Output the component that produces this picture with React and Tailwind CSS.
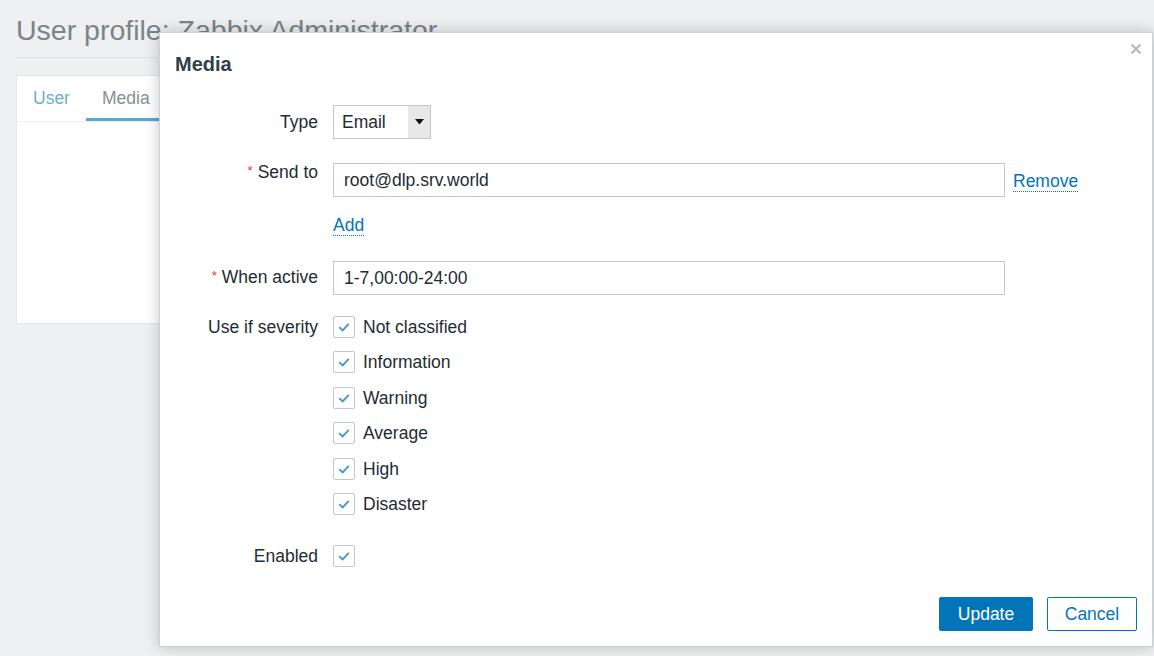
import { useState } from "react";

const font = { fontFamily: '"Liberation Sans", Arial, sans-serif' };

const severities = [
  "Not classified",
  "Information",
  "Warning",
  "Average",
  "High",
  "Disaster",
];

function Checkbox({ checked, onChange }) {
  return (
    <button
      type="button"
      onClick={onChange}
      className="w-[22px] h-[22px] shrink-0 flex items-center justify-center bg-white border border-[#bfc8cd] rounded-[2px]"
    >
      {checked && (
        <svg width="14" height="14" viewBox="0 0 14 14">
          <polyline
            points="2.2,7.2 5.6,10.4 11.8,3.8"
            fill="none"
            stroke="#3e97d0"
            strokeWidth="1.8"
          />
        </svg>
      )}
    </button>
  );
}

function Req() {
  return <span className="text-[#e33734] text-[13px] mr-[5px] relative -top-[3px]">*</span>;
}

const label = "w-[158px] shrink-0 text-right text-[17.5px] text-[#1f2c33] leading-[21px] whitespace-nowrap";
const inputClass =
  "h-[34px] w-[672px] bg-white border border-[#bfc8cd] px-[10px] text-[17.5px] text-[#1f2c33] outline-none";
const link = "text-[#0275b8] text-[17.5px] leading-[20px] border-b border-dotted border-[#0275b8]";

export default function App() {
  const [checks, setChecks] = useState(severities.map(() => true));
  const [enabled, setEnabled] = useState(true);
  const [sendTo, setSendTo] = useState("root@dlp.srv.world");
  const [period, setPeriod] = useState("1-7,00:00-24:00");

  return (
    <div style={font} className="relative w-[1154px] h-[656px] overflow-hidden bg-[#eef0f2]">
      {/* Page behind the dialog */}
      <div className="px-4">
        <div className="pt-[13px] pb-[10px] border-b border-[#dde2e5]">
          <h1 className="text-[28.5px] leading-[34px] text-[#7a8489]">User profile: Zabbix Administrator</h1>
        </div>
        <div className="mt-[17px] h-[249px] bg-white border border-[#e2e6e9]">
          <div className="flex border-b border-[#ebeef0]">
            <div className="px-4 h-[45px] flex items-center text-[17.5px] text-[#6aaed6]">User</div>
            <div className="px-4 h-[45px] flex items-center text-[17.5px] text-[#858f95] border-b-[3px] border-[#5ea6d3] pt-[3px]">
              Media
            </div>
          </div>
        </div>
      </div>

      {/* Dialog */}
      <div className="absolute left-[159px] top-[32px] w-[994px] h-[615px] bg-white border border-[#c9d2d6] shadow-[0_0_14px_rgba(0,0,0,0.22)] flex flex-col">
        <div className="pt-[19px] pl-[15px] text-[20px] leading-[24px] font-bold text-[#2f3f48]">Media</div>
        <button className="absolute right-[9px] top-[9px] w-[14px] h-[14px] flex items-center justify-center">
          <svg width="12" height="12" viewBox="0 0 12 12">
            <path d="M1.5 1.5 L10.5 10.5 M10.5 1.5 L1.5 10.5" stroke="#b0b8bc" strokeWidth="2" />
          </svg>
        </button>

        {/* Type */}
        <div className="flex items-center mt-[29px]">
          <div className={label}>Type</div>
          <div className="ml-[15px] h-[34px] w-[98px] flex border border-[#bfc8cd] bg-white">
            <span className="flex-1 pl-[8px] flex items-center text-[17.5px] text-[#1f2c33]">Email</span>
            <span className="w-[22px] bg-[#e8e8e8] flex items-center justify-center">
              <svg width="9" height="6" viewBox="0 0 9 6">
                <path d="M0 0 H9 L4.5 5.5 Z" fill="#111" />
              </svg>
            </span>
          </div>
        </div>

        {/* Send to */}
        <div className="flex items-start mt-[24px]">
          <div className={label + " -mt-[1px]"}>
            <Req />
            Send to
          </div>
          <input
            value={sendTo}
            onChange={(e) => setSendTo(e.target.value)}
            className={inputClass + " ml-[15px]"}
          />
          <div className="ml-[8px] mt-[7px]">
            <span className={link}>Remove</span>
          </div>
        </div>

        <div className="flex mt-[16px] h-[24px]">
          <div className="w-[158px]" />
          <div className="ml-[15px] pt-[1px]">
            <span className={link}>Add</span>
          </div>
        </div>

        {/* When active */}
        <div className="flex items-center mt-[24px]">
          <div className={label}>
            <Req />
            When active
          </div>
          <input
            value={period}
            onChange={(e) => setPeriod(e.target.value)}
            className={inputClass + " ml-[15px]"}
          />
        </div>

        {/* Severity */}
        <div className="flex items-start mt-[21px]">
          <div className={label + " leading-[22px]"}>Use if severity</div>
          <div className="ml-[15px] flex flex-col gap-[13.4px]">
            {severities.map((s, i) => (
              <div key={s} className="flex items-center gap-[8px]">
                <Checkbox
                  checked={checks[i]}
                  onChange={() => setChecks(checks.map((c, j) => (j === i ? !c : c)))}
                />
                <span className="text-[17.5px] leading-[22px] text-[#1f2c33]">{s}</span>
              </div>
            ))}
          </div>
        </div>

        {/* Enabled */}
        <div className="flex items-center mt-[30px]">
          <div className={label + " leading-[22px]"}>Enabled</div>
          <div className="ml-[15px]">
            <Checkbox checked={enabled} onChange={() => setEnabled(!enabled)} />
          </div>
        </div>

        <div className="flex justify-end gap-[14px] mt-[30px] pr-[15px]">
          <button className="h-[34px] w-[94px] bg-[#0275b8] border border-[#0275b8] rounded-[2px] text-white text-[17.5px]">
            Update
          </button>
          <button className="h-[34px] w-[90px] bg-white border border-[#0275b8] rounded-[2px] text-[#0275b8] text-[17.5px]">
            Cancel
          </button>
        </div>
      </div>
    </div>
  );
}
